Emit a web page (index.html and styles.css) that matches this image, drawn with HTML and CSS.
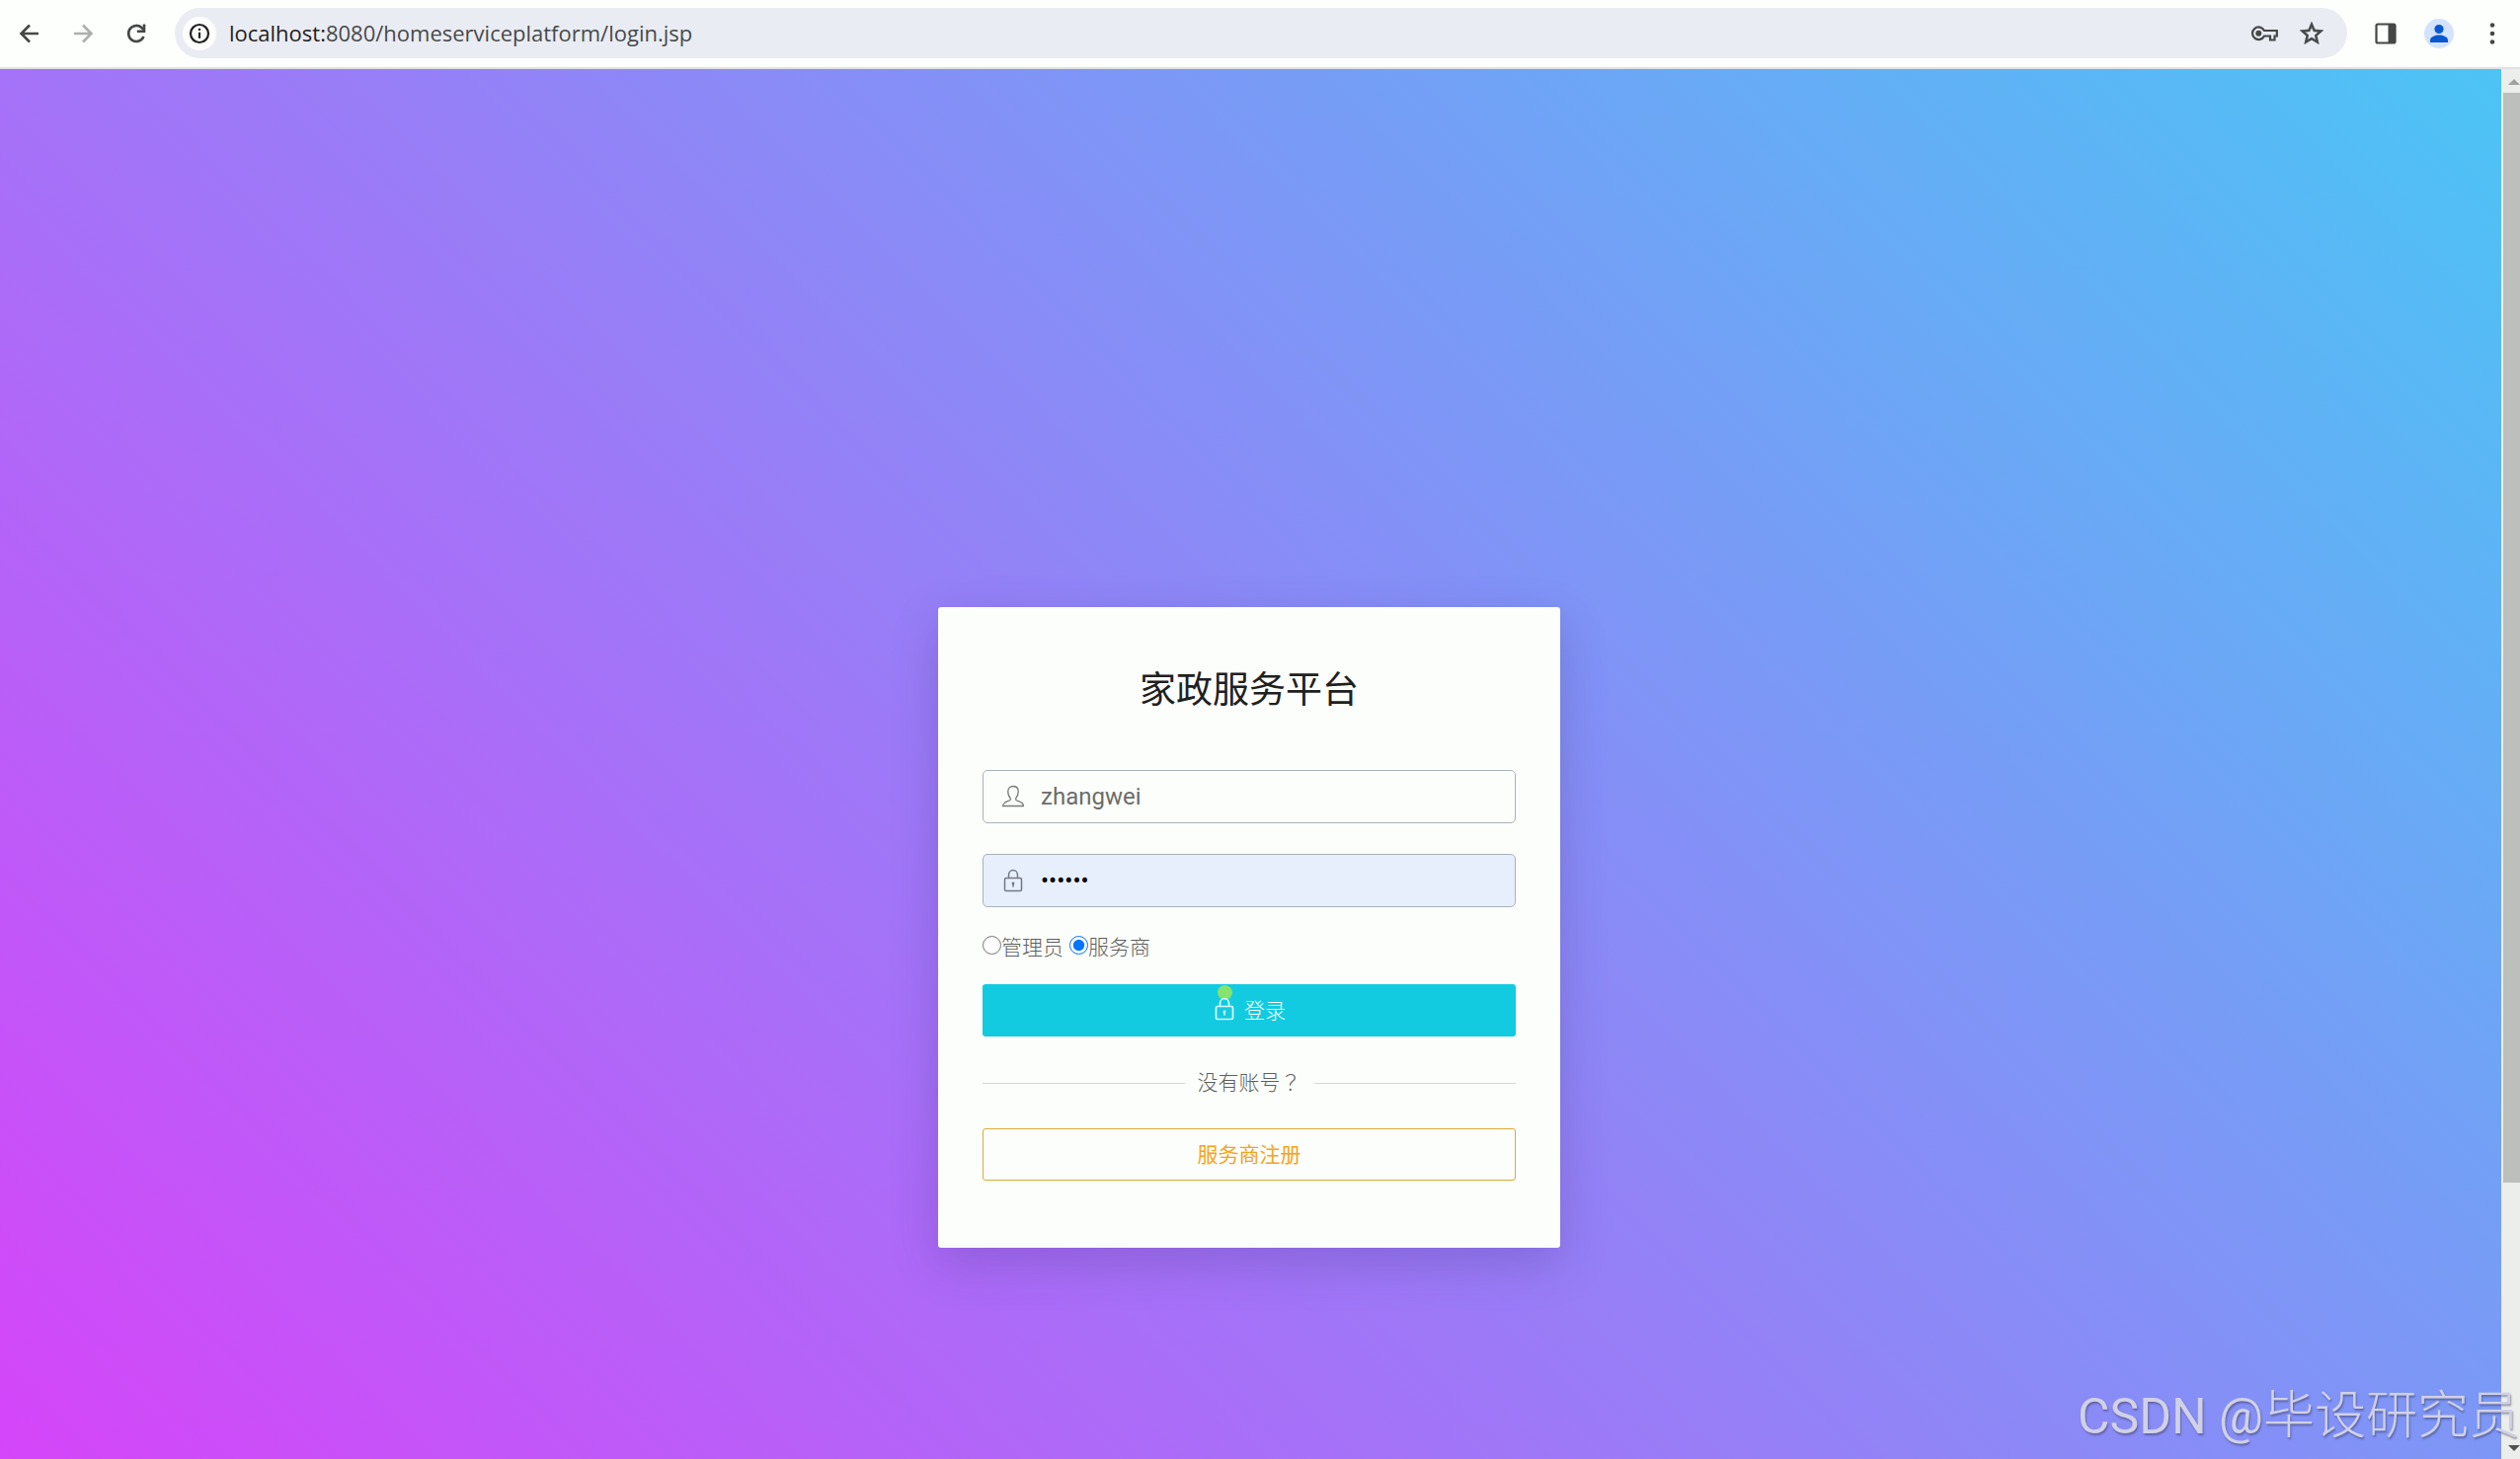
FILE: index.html
```html
<!DOCTYPE html>
<html lang="zh-CN">
<head>
    <meta charset="UTF-8">
    <meta name="viewport" content="width=device-width, initial-scale=1.0">
    <title>家政服务平台</title>
    <link rel="stylesheet" href="styles.css">
</head>
<body>
    <!-- Browser toolbar -->
    <header class="toolbar">
        <nav class="toolbar-nav">
            <button class="icon-btn" type="button" aria-label="Back">
                <svg width="28" height="28" viewBox="0 0 28 28"><path d="M23 14H6M14 5.500L5.500 14l8.500 8.500" fill="none" stroke="#444746" stroke-width="2.600"/></svg>
            </button>
            <button class="icon-btn" type="button" aria-label="Forward">
                <svg width="28" height="28" viewBox="0 0 28 28"><path d="M5 14h17M14 5.500l8.500 8.500-8.500 8.500" fill="none" stroke="#adafad" stroke-width="2.600"/></svg>
            </button>
            <button class="icon-btn" type="button" aria-label="Reload">
                <svg width="28" height="28" viewBox="0 0 28 28"><path d="M21.500 17a8 8 0 1 1-1.500-8.500L22 10.500" fill="none" stroke="#444746" stroke-width="2.600"/><path d="M23.300 4.500v8.500h-8.500v-2.600h5.900V4.500z" fill="#444746"/></svg>
            </button>
        </nav>
        <div class="address-bar">
            <button class="site-info" type="button" aria-label="Site information">
                <svg width="22" height="22" viewBox="0 0 22 22"><circle cx="11" cy="11" r="9" fill="none" stroke="#1f2120" stroke-width="2.200"/><path d="M11 9.800v6M11 5.800v2.200" stroke="#1f2120" stroke-width="2.200"/></svg>
            </button>
            <p class="url">localhost:<span>8080/homeserviceplatform/login.jsp</span></p>
            <button class="icon-btn" type="button" aria-label="Passwords">
                <svg width="28" height="28" viewBox="0 0 28 28"><path d="M14 11h12.800v5.500h-2.300v4h-4.500v-4h-6a6.300 6.300 0 1 1 0-5.500z" fill="none" stroke="#444746" stroke-width="2.200"/><circle cx="8.300" cy="13.800" r="3" fill="#444746"/></svg>
            </button>
            <button class="icon-btn" type="button" aria-label="Bookmark">
                <svg width="28" height="28" viewBox="0 0 24 24"><path d="M22 9.240l-7.190-.62L12 2 9.190 8.630 2 9.240l5.460 4.730L5.820 21 12 17.270 18.180 21l-1.630-7.030zM12 15.400l-3.760 2.270 1-4.280-3.320-2.880 4.380-.38L12 6.100l1.710 4.040 4.380.38-3.320 2.880 1 4.280z" fill="#444746" stroke="#444746" stroke-width=".6"/></svg>
            </button>
        </div>
        <div class="toolbar-menu">
            <button class="icon-btn" type="button" aria-label="Side panel">
                <svg width="28" height="28" viewBox="0 0 28 28"><rect x="4.500" y="4.500" width="19" height="19" rx="1.500" fill="none" stroke="#444746" stroke-width="2.200"/><path d="M16.500 4h7v20h-7z" fill="#444746"/></svg>
            </button>
            <button class="icon-btn profile" type="button" aria-label="Profile">
                <svg width="30" height="30" viewBox="0 0 30 30"><circle cx="15" cy="10.500" r="4.600" fill="#0b57d0"/><path d="M6 24v-2.500c0-3 5-5 9-5s9 2 9 5V24z" fill="#0b57d0"/></svg>
            </button>
            <button class="icon-btn" type="button" aria-label="Menu">
                <svg width="28" height="28" viewBox="0 0 28 28"><g fill="#444746"><circle cx="14" cy="5.500" r="2.300"/><circle cx="14" cy="14" r="2.300"/><circle cx="14" cy="22.500" r="2.300"/></g></svg>
            </button>
        </div>
    </header>

    <div class="window">
        <!-- Login page -->
        <main class="page">
            <form class="login-card">
                <h1 class="title">家政服务平台</h1>

                <div class="field">
                    <label for="username" aria-label="用户名">
                        <svg width="24" height="24" viewBox="0 0 24 24"><path d="M9.200 13.500C7.600 12 6.800 9.500 6.800 6.800c0-3.300 2-5.300 5.200-5.300s5.200 2 5.200 5.300c0 2.700-.8 5.200-2.400 6.700v1.800c.3 1.300 7.700 1.600 7.700 6.200h-21c0-4.600 7.400-4.900 7.700-6.200z" fill="none" stroke="#777b78" stroke-width="1.300" stroke-linejoin="round"/></svg>
                    </label>
                    <input type="text" id="username" name="username" value="zhangwei">
                </div>

                <div class="field field-filled">
                    <label for="password" aria-label="密码">
                        <svg width="24" height="24" viewBox="0 0 24 24"><g fill="none" stroke="#737983" stroke-width="1.500"><rect x="3.500" y="9.500" width="17" height="13" rx="1.500"/><path d="M7.500 9.500V6.500a4.500 5 0 0 1 9 0v3M12 14.500v4"/></g><circle cx="12" cy="15" r="1.400" fill="#737983"/></svg>
                    </label>
                    <input type="password" id="password" name="password" value="123456">
                </div>

                <div class="roles">
                    <label><input type="radio" name="role" value="admin">管理员</label>
                    <label><input type="radio" name="role" value="provider" checked>服务商</label>
                </div>

                <button class="btn btn-login" type="submit">
                    <span class="lock">
                        <svg width="24" height="24" viewBox="0 0 24 24"><g fill="none" stroke="#d8fbff" stroke-width="1.700"><rect x="3.500" y="9.500" width="17" height="13" rx="1.500"/><path d="M7.500 9.500V6.500a4.500 5 0 0 1 9 0v3M12 14.500v4"/></g><circle cx="12" cy="15" r="1.400" fill="#d8fbff"/></svg>
                    </span>
                    登录
                </button>

                <p class="divider"><span>没有账号<span class="mark" lang="zh-TW">？</span></span></p>

                <button class="btn btn-register" type="button">服务商注册</button>
            </form>
        </main>

        <!-- Scrollbar -->
        <div class="scrollbar">
            <svg class="scroll-arrow" width="12" height="6" viewBox="0 0 12 6"><path d="M0 6l6-6 6 6z" fill="#a0a29f"/></svg>
            <div class="scroll-thumb"></div>
            <div class="scroll-rest"></div>
            <svg class="scroll-arrow" width="12" height="6" viewBox="0 0 12 6"><path d="M0 0l6 6 6-6z" fill="#50524f"/></svg>
        </div>
    </div>

    <p class="watermark"><span>CSDN @</span>毕设研究员</p>
</body>
</html>
```
FILE: styles.css
```css
* {
    margin: 0;
    padding: 0;
    box-sizing: border-box;
}
body {
    display: flex;
    flex-direction: column;
    height: 100vh;
    overflow: hidden;
    position: relative;
    font-family: Roboto, "Noto Sans CJK SC", sans-serif;
    font-size: 21px;
    font-weight: 300;
    color: #5c5f5d;
}
button {
    border: none;
    background: none;
    font: inherit;
    cursor: pointer;
}
svg {
    display: block;
}
/* Browser toolbar */
.toolbar {
    display: flex;
    align-items: center;
    gap: 22px;
    padding: 8px 14px 9px 16px;
    background: #fdfffc;
    border-bottom: 2px solid #dfe1e3;
}
.toolbar-nav {
    display: flex;
    gap: 26px;
    padding-right: 3px;
}
.toolbar-menu {
    display: flex;
    align-items: center;
    gap: 25px;
    padding-left: 3px;
}
.address-bar {
    flex: 1;
    display: flex;
    align-items: center;
    gap: 20px;
    height: 51px;
    padding: 0 22px 0 8px;
    border-radius: 26px;
    background: #eaecf4;
}
.site-info {
    display: flex;
    align-items: center;
    justify-content: center;
    width: 34px;
    height: 34px;
    border-radius: 50%;
    background: #fdfffc;
}
.url {
    flex: 1;
    margin-left: -7px;
    padding-bottom: 2px;
    font-family: "Open Sans", sans-serif;
    font-size: 22px;
    font-weight: 400;
    line-height: 30px;
    color: #1f2120;
}
.url span {
    color: #474a4a;
}
.profile {
    border-radius: 50%;
    background: #d3e3fd;
}
/* Login page */
.window {
    flex: 1;
    display: flex;
    min-height: 0;
}
.page {
    flex: 1;
    display: flex;
    justify-content: center;
    align-items: flex-start;
    padding: 545px 3px 0 0;
    overflow: hidden;
    background: linear-gradient(45deg, #d545f9, #4cc4f5);
}
.login-card {
    display: flex;
    flex-direction: column;
    width: 630px;
    padding: 57px 45px 68px;
    border-radius: 3px;
    background: #fcfefb;
    box-shadow: 0 16px 48px rgba(60, 40, 120, 0.24);
}
.title {
    margin-bottom: 52px;
    font-size: 37px;
    font-weight: 400;
    line-height: 56px;
    text-align: center;
    color: #1f211f;
}
.field {
    display: flex;
    align-items: center;
    gap: 16px;
    height: 54px;
    margin-bottom: 31px;
    padding: 0 18px;
    border: 1px solid #a9b2b8;
    border-radius: 5px;
}
.field input {
    flex: 1;
    border: none;
    outline: none;
    background: none;
    font-family: Roboto, sans-serif;
    font-size: 24px;
    color: #6a6d6a;
}
.field-filled {
    background: #e7effc;
}
.field-filled input {
    color: #000;
}
.roles {
    display: flex;
    gap: 6px;
    margin-top: -6px;
    margin-bottom: 21px;
    line-height: 32px;
}
.roles label {
    display: flex;
    align-items: center;
}
.roles input {
    width: 19px;
    height: 19px;
    margin-bottom: 5px;
    accent-color: #0075ff;
}
.btn {
    display: flex;
    align-items: center;
    justify-content: center;
    gap: 8px;
    height: 53px;
    padding-bottom: 4px;
    border-radius: 3px;
}
.btn-login {
    background: #12cbe0;
    color: #f4feff;
}
.lock {
    position: relative;
}
/* click highlight over the lock */
.lock::before {
    content: "";
    position: absolute;
    top: -12px;
    left: 5px;
    width: 15px;
    height: 15px;
    border-radius: 50%;
    background: #86e36c;
}
.lock svg {
    position: relative;
}
.divider {
    display: flex;
    align-items: center;
    gap: 13px;
    margin: 29px 0 28px;
    line-height: 32px;
}
.divider > span {
    padding-bottom: 2px;
}
.divider::before,
.divider::after {
    content: "";
    flex: 1;
    height: 1px;
    background: #d5d7d5;
}
.mark {
    font-family: "Noto Sans CJK TC", sans-serif;
}
.btn-register {
    border: 1px solid #dda93a;
    color: #f5a31a;
    font-weight: 400;
}
/* Scrollbar */
.scrollbar {
    display: flex;
    flex-direction: column;
    align-items: center;
    gap: 8px;
    width: 19px;
    padding: 10px 0 8px 2px;
    background: #eceeec;
}
.scroll-arrow {
    margin-left: 4px;
}
.scroll-thumb {
    flex: 163;
    width: 100%;
    background: #bdbfbc;
}
.scroll-rest {
    flex: 37;
}
/* Watermark */
.watermark {
    position: absolute;
    right: 0;
    bottom: 7px;
    font-size: 52px;
    font-weight: 300;
    line-height: 72px;
    color: #d0d1e6;
    text-shadow: 1px 2px 2px rgba(60, 60, 90, 0.5);
}
.watermark span {
    font-size: 50px;
    font-weight: 400;
}
```
